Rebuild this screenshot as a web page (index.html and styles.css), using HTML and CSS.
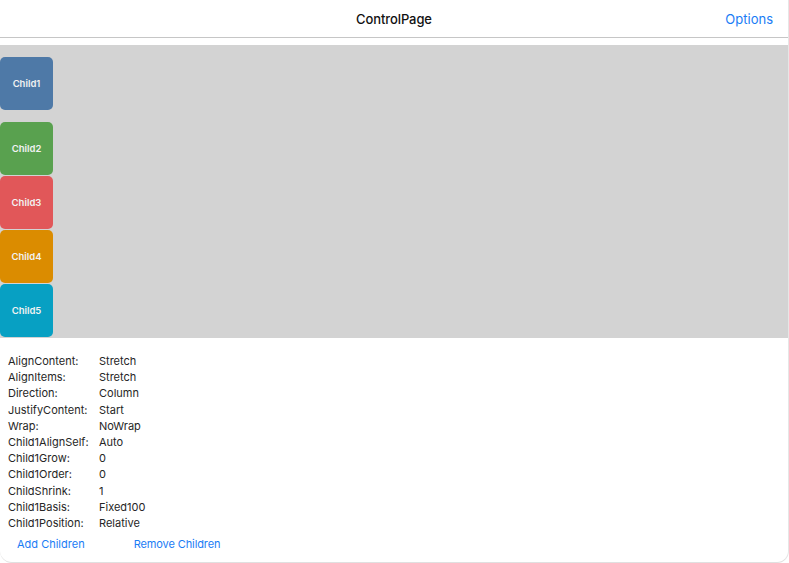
FILE: index.html
```html
<!DOCTYPE html>
<html>
<head>
<meta charset="utf-8">
<link rel="stylesheet" href="styles.css">
</head>
<body>
<div class="window">
  <header class="navbar">
    <div class="title">ControlPage</div>
    <div class="options">Options</div>
  </header>
  <section class="stage">
    <div class="child c1">Child1</div>
    <div class="child c2">Child2</div>
    <div class="child c3">Child3</div>
    <div class="child c4">Child4</div>
    <div class="child c5">Child5</div>
  </section>
  <section class="props">
    <div class="label">AlignContent:</div><div class="value">Stretch</div>
    <div class="label">AlignItems:</div><div class="value">Stretch</div>
    <div class="label">Direction:</div><div class="value">Column</div>
    <div class="label">JustifyContent:</div><div class="value">Start</div>
    <div class="label">Wrap:</div><div class="value">NoWrap</div>
    <div class="label">Child1AlignSelf:</div><div class="value">Auto</div>
    <div class="label">Child1Grow:</div><div class="value">0</div>
    <div class="label">Child1Order:</div><div class="value">0</div>
    <div class="label">ChildShrink:</div><div class="value">1</div>
    <div class="label">Child1Basis:</div><div class="value">Fixed100</div>
    <div class="label">Child1Position:</div><div class="value">Relative</div>
  </section>
  <div class="actions">
    <span class="btn add">Add Children</span>
    <span class="btn remove">Remove Children</span>
  </div>
</div>
</body>
</html>
```
FILE: styles.css
```css
html, body {
  margin: 0;
  padding: 0;
  background: #ffffff;
}
body {
  font-family: Inter, "Noto Sans", "Liberation Sans", sans-serif;
  color: #222;
}
.window {
  width: 789px;
  height: 563px;
  box-sizing: border-box;
  border-radius: 0 0 12px 12px;
  border-right: 1px solid #e6e6e6;
  border-bottom: 1px solid #e0e0e0;
  overflow: hidden;
  display: flex;
  flex-direction: column;
}
.navbar {
  height: 38px;
  box-sizing: border-box;
  border-bottom: 1px solid #c6c6c6;
  display: flex;
  align-items: center;
  justify-content: center;
  position: relative;
}
.title {
  font-size: 13px;
  font-weight: 500;
  color: #111;
  letter-spacing: -0.1px;
}
.options {
  position: absolute;
  right: 15px;
  top: 11px;
  font-size: 13px;
  color: #1a7cf5;
}
.stage {
  margin-top: 7px;
  height: 293px;
  background: #d3d3d3;
  display: flex;
  flex-direction: column;
  padding-top: 12px;
  box-sizing: border-box;
}
.child {
  width: 53px;
  height: 53px;
  border-radius: 5px;
  color: #f2f2f2;
  font-size: 9.5px;
  font-weight: 600;
  display: flex;
  align-items: center;
  justify-content: center;
  flex-shrink: 0;
  margin-bottom: 1px;
}
.c1 { background: #4e79a7; margin-bottom: 12px; }
.c2 { background: #59a14f; }
.c3 { background: #e15759; }
.c4 { background: #db8c00; }
.c5 { background: #07a0c3; }
.props {
  display: grid;
  grid-template-columns: 91px auto;
  grid-auto-rows: 16.2px;
  padding: 15px 0 0 8px;
  font-size: 11px;
  line-height: 16.2px;
  color: #262626;
}
.actions {
  display: flex;
  padding: 5px 0 0 17px;
  gap: 49px;
  font-size: 11px;
  line-height: 16px;
}
.btn {
  color: #1a7cf5;
}
.remove {
  letter-spacing: -0.1px;
}
```
